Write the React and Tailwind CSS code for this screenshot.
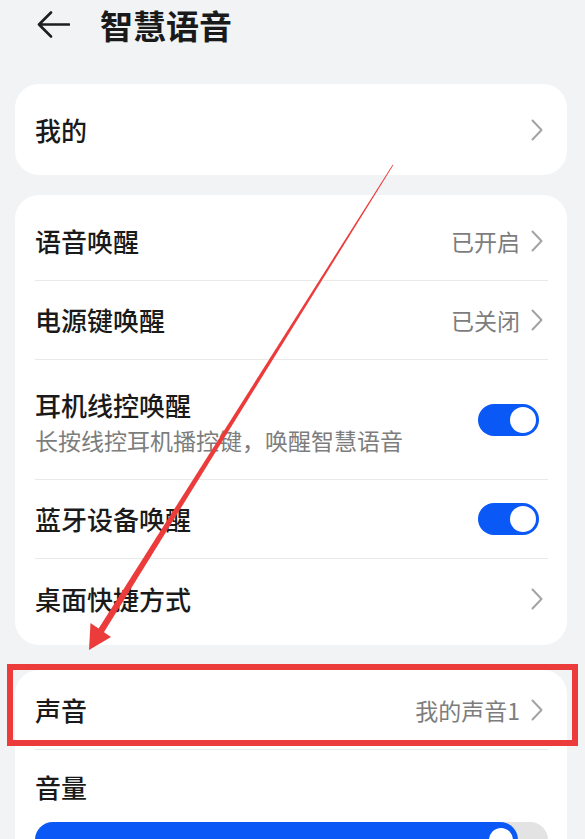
import React from 'react';

const Chevron = () => (
  <svg width="12" height="22" viewBox="0 0 12 22" fill="none" className="shrink-0">
    <path d="M1.5 1.5 L10.5 11 L1.5 20.5" stroke="#a3a3a3" strokeWidth="2" strokeLinecap="round" strokeLinejoin="round" />
  </svg>
);

const Toggle = () => (
  <div className="mr-[4px] flex h-[32px] w-[61px] shrink-0 items-center justify-end rounded-full bg-[#0a59f7] p-[3px]">
    <div className="h-[26px] w-[26px] rounded-full bg-white" />
  </div>
);

const Row = ({ title, value, last, children, tall }) => (
  <div className="pl-[20px] pr-[19px]">
    <div className={`flex items-center justify-between pr-[5px] ${last ? '' : 'border-b border-[#e9e9e9]'} ${tall ? '' : 'h-[79px]'}`}>
      {children || <span className="text-[26px] font-medium leading-[34px] text-[#1a1a1a]">{title}</span>}
      <div className="flex items-center gap-[11px]">
        {value}
      </div>
    </div>
  </div>
);

const Value = ({ text }) => (
  <>
    <span className="text-[23px] leading-[30px] text-[#7d7d7d]">{text}</span>
    <Chevron />
  </>
);

export default function App() {
  return (
    <div className="relative h-[839px] w-[585px] overflow-hidden bg-[#f1f3f5] font-['Noto_Sans_CJK_SC','Noto_Sans',sans-serif]">
      {/* header */}
      <div className="flex h-[50px] items-center pl-[37px]">
        <svg width="33" height="28" viewBox="0 0 33 28" fill="none">
          <path d="M14 1.5 L2 13.5 L14 25.5 M2 13.5 H32" stroke="#1e1e1e" strokeWidth="2.6" strokeLinecap="round" strokeLinejoin="round" />
        </svg>
        <h1 className="ml-[30px] text-[33px] font-bold leading-[40px] text-[#1a1a1a]">智慧语音</h1>
      </div>

      {/* 我的 */}
      <div className="ml-[15px] mt-[34px] flex h-[91px] w-[552px] items-center justify-between rounded-[24px] bg-white pl-[20px] pr-[24px]">
        <span className="text-[26px] font-medium leading-[34px] text-[#1a1a1a]">我的</span>
        <Chevron />
      </div>

      {/* wake-up options */}
      <div className="ml-[15px] mt-[20px] w-[552px] rounded-[24px] bg-white py-[7px]">
        <Row title="语音唤醒" value={<Value text="已开启" />} />
        <Row title="电源键唤醒" value={<Value text="已关闭" />} />
        <Row tall value={<Toggle />}>
          <div className="flex flex-col pb-[23px] pt-[28px]">
            <span className="text-[26px] font-medium leading-[34px] text-[#1a1a1a]">耳机线控唤醒</span>
            <span className="mt-[2px] text-[23px] leading-[32px] text-[#7d7d7d]">长按线控耳机播控键，唤醒智慧语音</span>
          </div>
        </Row>
        <Row title="蓝牙设备唤醒" value={<Toggle />} />
        <Row title="桌面快捷方式" value={<Chevron />} last />
      </div>

      {/* voice + volume */}
      <div className="ml-[15px] mt-[25px] w-[552px] rounded-t-[24px] bg-white pt-[1px]">
        <Row title="声音" value={<Value text="我的声音1" />} />
        <div className="pl-[20px] pr-[19px] pt-[20px]">
          <span className="text-[26px] font-medium leading-[34px] text-[#1a1a1a]">音量</span>
          <div className="mt-[18px] h-[36px] w-full rounded-full bg-[#e3e3e3]">
            <div className="relative h-full w-[483px] rounded-full bg-[#0a59f7]">
              <div className="absolute right-[5px] top-[6px] h-[24px] w-[24px] rounded-full bg-white" />
            </div>
          </div>
        </div>
      </div>

      {/* annotation: highlight box */}
      <div className="pointer-events-none absolute left-[7px] top-[664px] h-[82px] w-[571px] border-[6px] border-[#ec3b3b]" />

      {/* annotation: arrow */}
      <svg className="pointer-events-none absolute left-0 top-0" width="585" height="839" viewBox="0 0 585 839">
        <polygon points="393.4,165 392.6,164.7 98,629.4 103.6,632.8" fill="#ec3b3b" />
        <polygon points="89,650 90.5,623 111,637" fill="#ec3b3b" />
      </svg>
    </div>
  );
}
